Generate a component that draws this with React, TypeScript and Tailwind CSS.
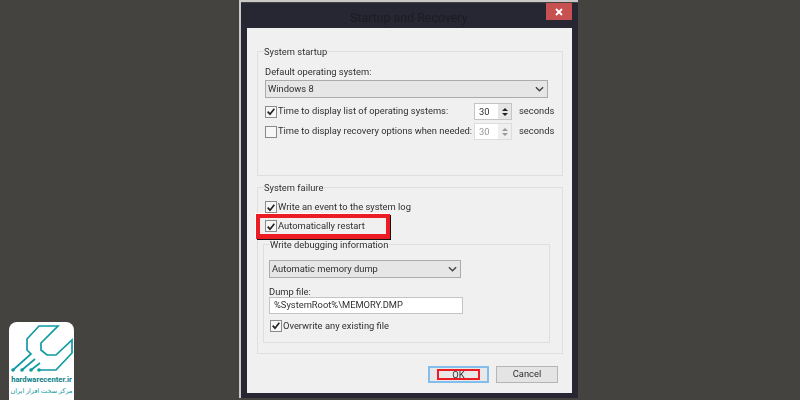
const ui = "font-['Roboto','Noto_Sans',sans-serif]"

function Check({ checked = false }: { checked?: boolean }) {
  return (
    <span className="flex h-3 w-3 shrink-0 items-center justify-center border border-[#8a8a8a] bg-[#f7f7f7]">
      {checked && (
        <svg viewBox="0 0 12 12" className="h-[11px] w-[11px]">
          <path d="M2 6.2 L4.8 9.2 L10 2.6" fill="none" stroke="#222" strokeWidth="2" />
        </svg>
      )}
    </span>
  )
}

function Chevron() {
  return (
    <svg viewBox="0 0 10 6" className="h-[6px] w-[9px]">
      <path d="M1 1 L5 5 L9 1" fill="none" stroke="#444" strokeWidth="1.6" />
    </svg>
  )
}

function Select({ value, className }: { value: string; className: string }) {
  return (
    <div className={`flex h-[18px] items-center justify-between border border-[#ababab] bg-[#e6e6e6] pl-[2px] pr-[3px] ${className}`}>
      <span>{value}</span>
      <Chevron />
    </div>
  )
}

function Spinner({ disabled = false }: { disabled?: boolean }) {
  return (
    <div className={`flex h-[17px] w-[38px] border bg-white ${disabled ? 'border-[#dcdcdc] text-[#999]' : 'border-[#c4c4c4]'}`}>
      <span className="flex-1 pl-[4px] leading-[15px]">30</span>
      <div className={`flex w-[13px] flex-col items-center justify-center gap-[2px] ${disabled ? 'bg-[#efefef]' : 'bg-[#e6e6e6]'}`}>
        <svg viewBox="0 0 6 3" className="h-[3px] w-[6px]"><path d="M3 0 L6 3 H0 Z" fill={disabled ? '#999' : '#222'} /></svg>
        <svg viewBox="0 0 6 3" className="h-[3px] w-[6px]"><path d="M0 0 H6 L3 3 Z" fill={disabled ? '#999' : '#222'} /></svg>
      </div>
    </div>
  )
}

function Logo() {
  return (
    <div className="absolute bottom-0 left-[9px] flex h-[78px] w-[65px] flex-col items-center rounded-t-[8px] bg-white">
      <svg viewBox="0 0 65 50" className="h-[50px] w-[65px] shrink-0" fill="none" stroke="#0e9aa2" strokeWidth="1.7">
        <path d="M30 48 H47 L63 31 V18 L47 33 H38 L32 28 V21 L49 4 H30 L18 17 V28 L22 32 L4 48" />
        <path d="M26 37 L13 48 M31 41 L22 48" />
        <circle cx="4" cy="48" r="1.8" fill="#0e9aa2" stroke="none" />
        <circle cx="13" cy="48" r="1.8" fill="#0e9aa2" stroke="none" />
        <circle cx="22" cy="48" r="1.8" fill="#0e9aa2" stroke="none" />
        <circle cx="30" cy="48" r="1.8" fill="#0e9aa2" stroke="none" />
      </svg>
      <div className="mt-[3px] whitespace-nowrap font-['Roboto',sans-serif] text-[7.7px] font-bold leading-[10px] text-[#0c7f88]">hardwarecenter.ir</div>
      <div dir="rtl" className="mt-px whitespace-nowrap font-['Noto_Sans','DejaVu_Sans',sans-serif] text-[6.5px] leading-[10px] text-[#0e9aa2]">مرکز سخت افزار ایران</div>
    </div>
  )
}

export default function App() {
  return (
    <div className="relative h-[400px] w-[800px] overflow-hidden bg-[#45433f]">
      <div className="ml-[239px] w-[339px] border-l-2 border-t-2 border-[#c9c9c9] pt-px blur-[0.3px]">
        <div className={`${ui} bg-[#262733] px-[6px] pb-[5px] text-[9.35px] text-[#2f2f2f]`}>
          <div className="flex h-[25px] items-start justify-between">
            <span className="ml-[103px] mt-[6px] text-[12.4px] text-[#1c1c24]">Startup and Recovery</span>
            <div className="flex h-[17px] w-[26px] items-center justify-center bg-[#c75050]">
              <svg viewBox="0 0 8 8" className="h-2 w-2"><path d="M1 1 L7 7 M7 1 L1 7" stroke="#fff" strokeWidth="1.8" /></svg>
            </div>
          </div>
          <div className="h-[365px] bg-[#f0f0f0] px-[10px] pt-[23px]">
            <fieldset className="h-[125px] w-[306px] min-w-0 border border-[#dfdfdf] pl-[6px]">
              <div className="-mt-[7px] w-fit bg-[#f0f0f0] leading-[13px]">System startup</div>
              <div className="mt-[7px] pl-px leading-[13px]">Default operating system:</div>
              <Select value="Windows 8" className="ml-px mt-[2px] w-[283px]" />
              <div className="mt-[5px] flex h-[17px] items-center pl-px">
                <Check checked />
                <span className="ml-px w-[196px] whitespace-nowrap">Time to display list of operating systems:</span>
                <Spinner />
                <span className="ml-[7px]">seconds</span>
              </div>
              <div className="mt-[3px] flex h-[17px] items-center pl-px">
                <Check />
                <span className="ml-px w-[196px] whitespace-nowrap">Time to display recovery options when needed:</span>
                <Spinner disabled />
                <span className="ml-[7px]">seconds</span>
              </div>
            </fieldset>

            <fieldset className="mt-[11px] h-[167px] w-[306px] min-w-0 border border-[#dfdfdf] pl-[6px]">
              <div className="-mt-[7px] w-fit bg-[#f0f0f0] leading-[13px]">System failure</div>
              <div className="mt-[6px] flex h-[14px] items-center gap-px pl-px">
                <Check checked />
                <span>Write an event to the system log</span>
              </div>
              <div className="relative z-10 -ml-[8px] flex h-[25px] w-[134px] items-center gap-px border-x-[4px] border-b-[5px] border-t-[4px] border-[#ed1c24] pl-[5px] shadow-[1px_1px_0_#111,-1px_-1px_0_#fff]">
                <Check checked />
                <span>Automatically restart</span>
              </div>
              <fieldset className="-ml-px mt-[5px] h-[99px] w-[287px] min-w-0 border border-[#dfdfdf] pl-[5px]">
                <div className="-mt-[7px] w-fit bg-[#f0f0f0] px-px leading-[13px]">Write debugging information</div>
                <Select value="Automatic memory dump" className="mt-[9px] w-[192px]" />
                <div className="mt-[9px] leading-[10px]">Dump file:</div>
                <div className="flex h-[17px] w-[194px] items-center border border-[#c4c4c4] bg-white pl-[4px]">%SystemRoot%\MEMORY.DMP</div>
                <div className="mt-[5px] flex h-[13px] items-center gap-px pl-px">
                  <Check checked />
                  <span>Overwrite any existing file</span>
                </div>
              </fieldset>
            </fieldset>

            <div className="mt-[12px] flex h-[17px] justify-end gap-[7px] pr-[4px]">
              <div className="flex w-[61px] items-center justify-center border-2 border-[#83bdeb] bg-[#e8e8e8]">
                <span className="flex h-[11px] w-[43px] items-center justify-center border-2 border-[#ed1c24] leading-none">OK</span>
              </div>
              <div className="flex w-[62px] items-center justify-center border border-[#b5b5b5] bg-[#e4e4e4]">Cancel</div>
            </div>
          </div>
        </div>
      </div>
      <Logo />
    </div>
  )
}
